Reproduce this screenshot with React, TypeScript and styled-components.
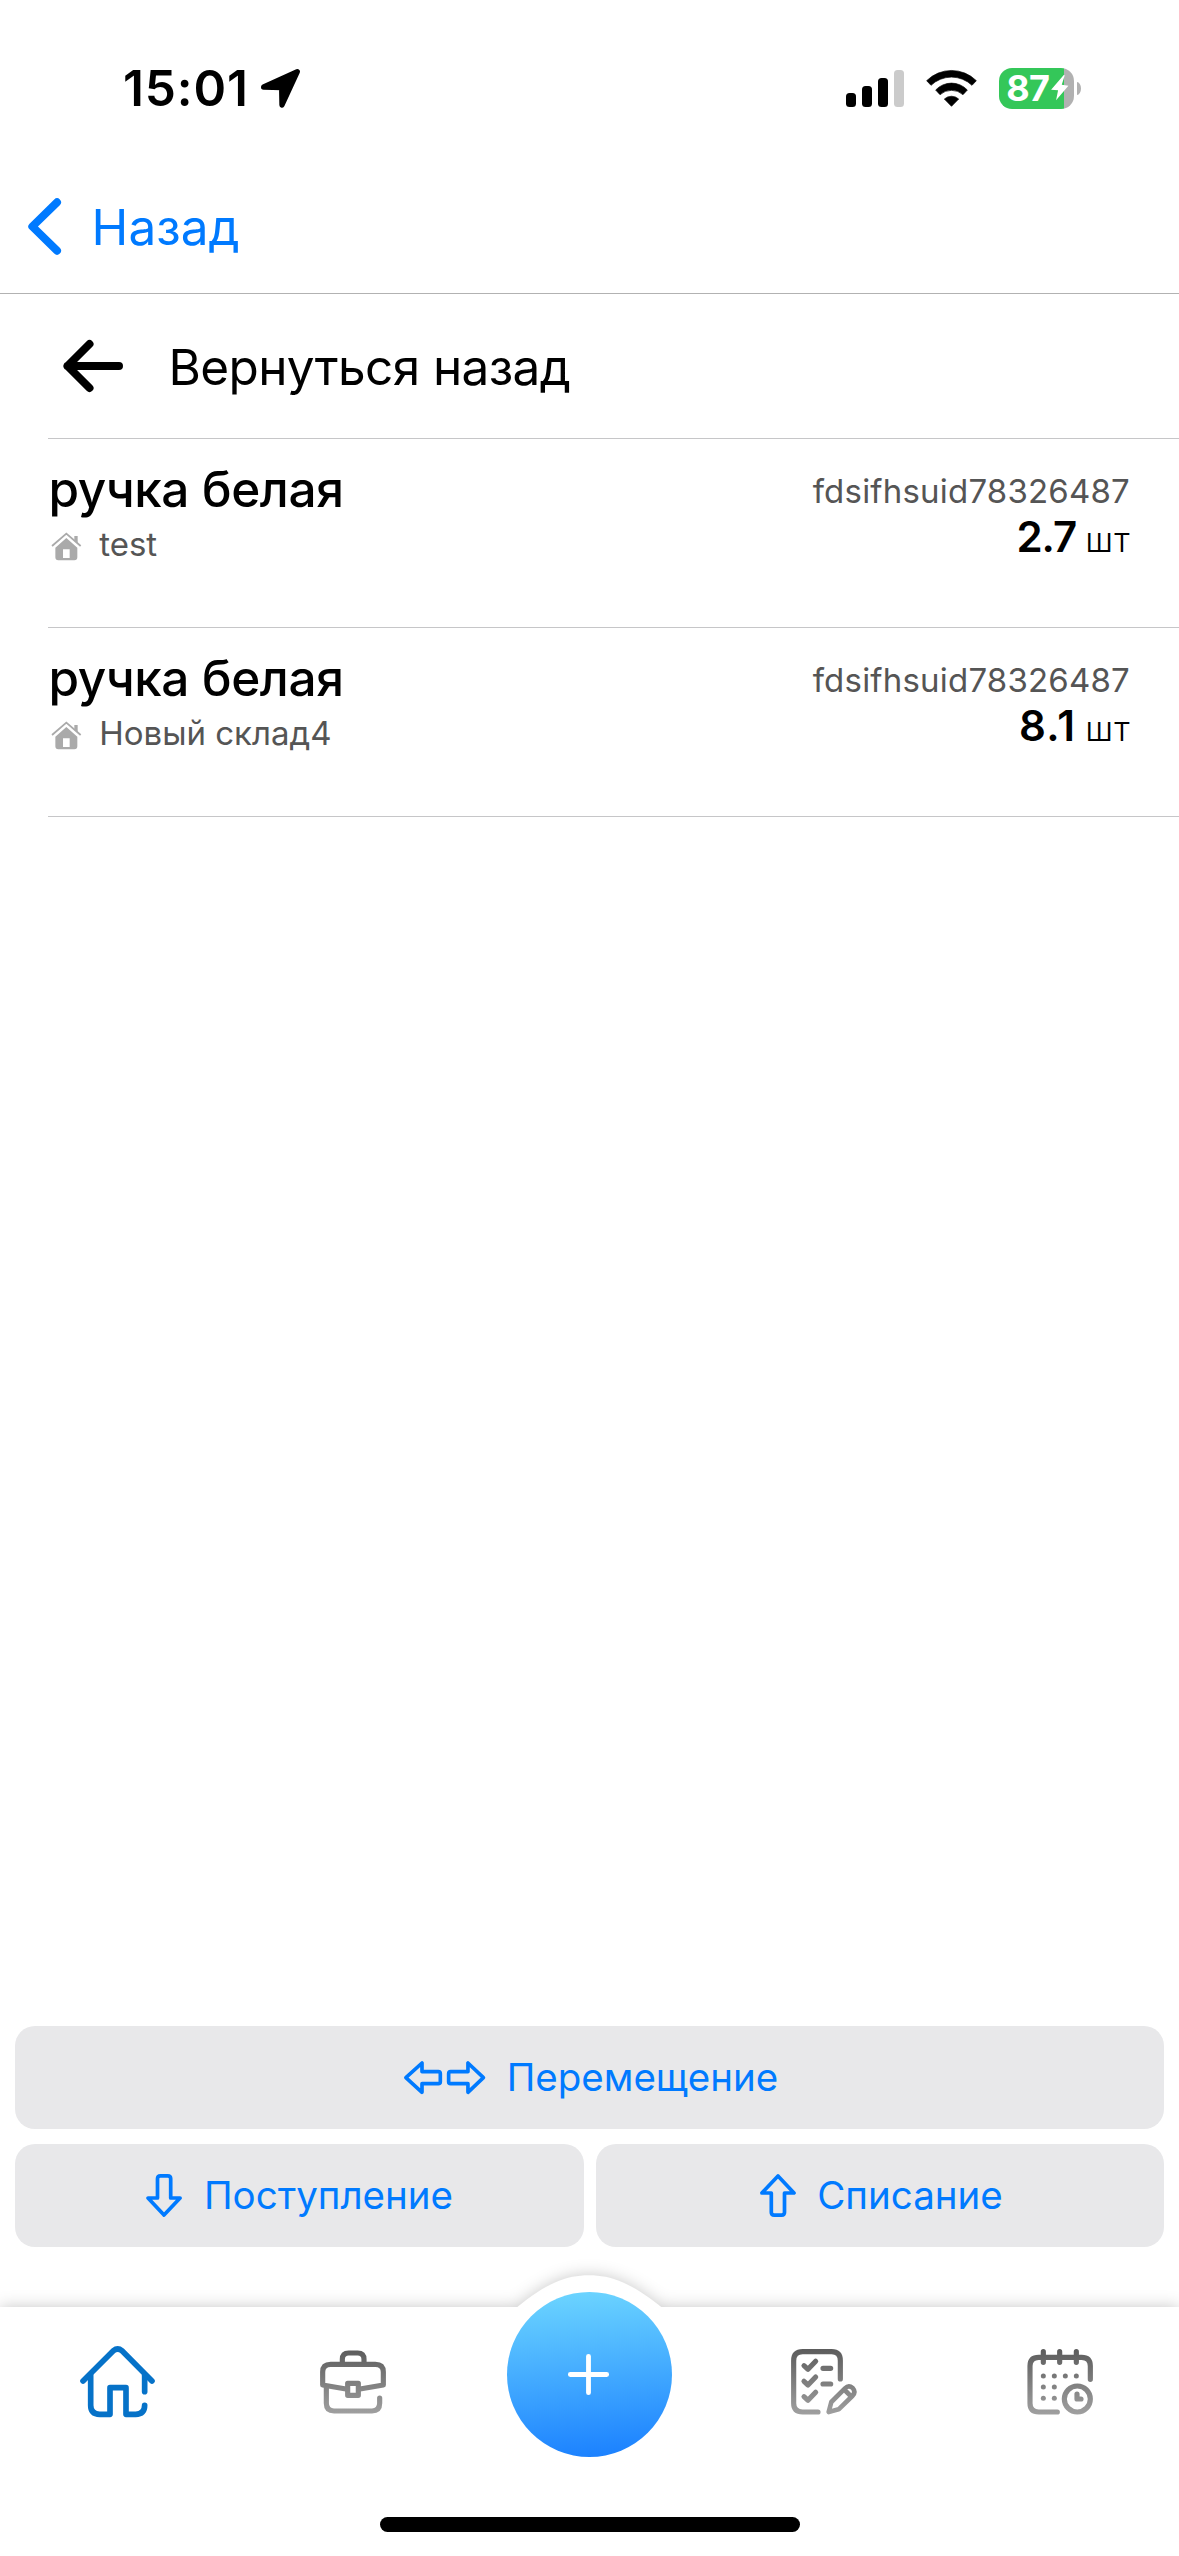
import React from "react";
import styled, { createGlobalStyle } from "styled-components";

const BLUE = "#007aff";

const GlobalStyle = createGlobalStyle`
  *, *::before, *::after { box-sizing: border-box; }
  body {
    margin: 0;
    background: #fff;
    color: #000;
    font-family: Inter, "Liberation Sans", sans-serif;
  }
  svg { display: block; flex: none; overflow: visible; }
  button { font: inherit; color: inherit; border: 0; background: none; padding: 0; margin: 0; }
`;

const Screen = styled.div`
  display: flex;
  flex-direction: column;
  width: 1179px;
  height: 2556px;
  overflow: hidden;
  background: #fff;
`;

/* Status bar */

const StatusBar = styled.header`
  display: flex;
  align-items: center;
  justify-content: space-between;
  height: 160px;
  padding: 16px 98px 0 123px;
`;

const StatusGroup = styled.div`
  display: flex;
  align-items: center;
`;

const Clock = styled.span`
  font-size: 49.5px;
  font-weight: 600;
  line-height: 60px;
  letter-spacing: 0.9px;
  margin-right: 12.2px;
`;

const Signal = styled.div`
  display: flex;
  align-items: flex-end;
  gap: 6px;
  height: 37px;
  margin-right: 22px;
`;

const SignalBar = styled.span<{ $height: number; $dim?: boolean }>`
  width: 10px;
  height: ${(p) => p.$height}px;
  border-radius: 3.5px;
  background: ${(p) => (p.$dim ? "#cbcbcb" : "#000")};
`;

const Battery = styled.div`
  display: flex;
  align-items: center;
  gap: 1.4px;
  width: 75px;
  height: 41px;
  margin: 0 3px 0 22px;
  padding-left: 7.3px;
  border-radius: 13px;
  background: linear-gradient(90deg, #34c759 65px, #b1b1b1 65px);
  color: #fff;
  font-size: 36px;
  font-weight: 700;
  line-height: 41px;
  letter-spacing: -0.7px;
`;

const BatteryCap = styled.span`
  width: 4px;
  height: 13px;
  border-radius: 0 4px 4px 0 / 0 6.5px 6.5px 0;
  background: #b1b1b1;
`;

/* Navigation */

const NavBar = styled.nav`
  display: flex;
  align-items: center;
  height: 134px;
  padding-left: 28px;
  border-bottom: 1px solid #b2b2b2;
  color: ${BLUE};
`;

const NavTitle = styled.span`
  margin-left: 30.6px;
  padding-top: 1px;
  font-size: 49.5px;
  line-height: 60px;
`;

const Content = styled.main`
  display: flex;
  flex-direction: column;
  flex: 1;
  padding-left: 48px;
`;

const BackRow = styled.div`
  display: flex;
  align-items: center;
  height: 145px;
  padding-left: 15px;
  border-bottom: 1px solid #c6c6c8;
`;

const BackLabel = styled.span`
  margin-left: 45.4px;
  padding-top: 2px;
  font-size: 49.5px;
  line-height: 60px;
  letter-spacing: -0.6px;
`;

/* Stock list */

const StockRow = styled.article`
  display: flex;
  justify-content: space-between;
  height: 189px;
  padding-right: 49px;
  border-bottom: 1px solid #c6c6c8;
`;

const StockInfo = styled.div`
  display: flex;
  flex-direction: column;
  padding-top: 20px;
`;

const StockName = styled.h2`
  margin: 0 0 5px;
  padding-left: 0.6px;
  font-size: 49.5px;
  font-weight: 500;
  line-height: 60px;
  letter-spacing: -0.38px;
`;

const Warehouse = styled.div`
  display: flex;
  align-items: center;
  gap: 17.8px;
  padding-left: 2.7px;
  font-size: 33px;
  line-height: 40px;
  color: #555;
`;

const WarehouseIcon = styled.span`
  padding-top: 5px;
`;

const StockFigures = styled.div`
  display: flex;
  flex-direction: column;
  align-items: flex-end;
  padding-top: 32px;
`;

const Code = styled.span`
  margin-bottom: 1px;
  font-size: 33px;
  line-height: 40px;
  letter-spacing: 0.2px;
  color: #555;
`;

const Quantity = styled.div`
  display: flex;
  align-items: baseline;
  gap: 9px;
  line-height: 50px;
`;

const Amount = styled.strong<{ $tracking: number }>`
  font-size: 42px;
  font-weight: 600;
  letter-spacing: ${(p) => p.$tracking}px;
`;

const Unit = styled.span`
  font-size: 34.5px;
  font-weight: 300;
  letter-spacing: 1px;
  margin-right: -0.5px;
`;

/* Actions */

const Actions = styled.section`
  display: grid;
  grid-template-columns: 1fr 1fr;
  gap: 15px 12px;
  padding: 0 15px 60px;
`;

const ActionButton = styled.button<{ $wide?: boolean; $inset?: number }>`
  grid-column: ${(p) => (p.$wide ? "1 / -1" : "auto")};
  display: flex;
  align-items: center;
  justify-content: center;
  gap: 21.5px;
  height: 103px;
  padding-left: ${(p) => p.$inset ?? 0}px;
  border-radius: 20px;
  background: #e8e8ea;
  color: ${BLUE};
  font-size: 38.5px;
  line-height: 48px;
`;

const ActionLabel = styled.span`
  padding-bottom: 2px;
`;

const Flip = styled.span`
  transform: rotate(180deg);
`;

/* Tab bar */

const TabBar = styled.footer`
  position: relative;
  display: flex;
  flex-direction: column;
  height: 249px;
`;

const TabBackdrop = styled.div`
  position: absolute;
  inset: 0;
  background: #fff;
  filter: drop-shadow(0 0 8px rgba(0, 0, 0, 0.22));
`;

const Bump = styled.svg`
  position: absolute;
  left: 517px;
  top: -32px;
`;

const Tabs = styled.div`
  position: relative;
  display: grid;
  grid-template-columns: repeat(5, 1fr);
  height: 150px;
`;

const Tab = styled.button<{ $active?: boolean }>`
  display: flex;
  align-items: center;
  justify-content: center;
  padding-right: ${(p) => (p.$active ? 0 : 2)}px;
`;

const AddButton = styled.button`
  display: flex;
  align-items: center;
  justify-content: center;
  justify-self: center;
  width: 165px;
  height: 165px;
  margin-top: -15px;
  border-radius: 50%;
  background: linear-gradient(175deg, #6cd5ff 2%, #1a80ff 98%);
`;

const HomeIndicator = styled.div`
  position: relative;
  width: 420px;
  height: 15px;
  margin: 60px auto 0;
  border-radius: 7.5px;
  background: #000;
`;

/* Icons */

const LocationIcon = () => (
  <svg width="39" height="39" viewBox="783 87 117 117" fill="#000" stroke="#000" strokeWidth="16" strokeLinejoin="round">
    <path d="M892 95 L846 195 L845 143 L791 141 Z" />
  </svg>
);

const WifiIcon = () => (
  <svg width="51" height="37" viewBox="378 87 153 111" fill="#000" stroke="#000" strokeWidth="2" strokeLinejoin="round">
    <path d="M380 119 A106 106 0 0 1 529 119 L516 133 A89 89 0 0 0 393 133 Z" />
    <path d="M407 147 A65 65 0 0 1 502 147 L489 161 A52 52 0 0 0 420 161 Z" />
    <path d="M433 174 A32 32 0 0 1 476 174 L454.500 196 Z" />
  </svg>
);

const BoltIcon = () => (
  <svg width="17.500" height="25.300" viewBox="752 108 52 76" fill="#fff">
    <path d="M790 108 L752 152 L773 154 L767 184 L804 140 L784 137 L793 109 Z" />
  </svg>
);

const ChevronIcon = () => (
  <svg width="33" height="57" viewBox="84 475 99 171" fill="none" stroke={BLUE} strokeWidth="24" strokeLinecap="round" strokeLinejoin="round">
    <path d="M171 488 L97 560.500 L171 633" />
  </svg>
);

const BackArrowIcon = () => (
  <svg width="60" height="52" viewBox="63 340 60 52" fill="none" stroke="#000" strokeWidth="8" strokeLinecap="round" strokeLinejoin="round">
    <path d="M119 366 H67.500 M89.500 344 L67.500 366 L89.500 388" />
  </svg>
);

const HouseIcon = () => (
  <svg width="30.700" height="29.300" viewBox="152 363 92 88">
    <path d="M155 405 L198 368 L241 405" fill="none" stroke="#aaa" strokeWidth="5.500" />
    <path d="M222 375 H232 V397 L222 388 Z" fill="#aaa" />
    <path fill="#aaa" fillRule="evenodd" d="M165 410 L198 381 L231 410 V439 Q231 448 222 448 H174 Q165 448 165 439 Z M188 415 V441 H208 V415 Z" />
  </svg>
);

const SwapIcon = () => (
  <svg width="81.300" height="33.300" viewBox="42 65 244 100" fill="none" stroke={BLUE} strokeWidth="11" strokeLinejoin="round">
    <path d="M47.500 115 L96 71 V97 H145 Q151 97 151 103 V127 Q151 133 145 133 H96 V159 Z" />
    <path d="M280.500 115 L234 71 V97 H182 Q176 97 176 103 V127 Q176 133 182 133 H234 V159 Z" />
  </svg>
);

const DownIcon = () => (
  <svg width="36" height="43" viewBox="0 0 36 43" fill="none" stroke={BLUE} strokeWidth="3.700" strokeLinejoin="round">
    <path d="M18 41.100 L2 24 H11.500 V4.800 Q11.500 1.900 14.400 1.900 H21.800 Q24.700 1.900 24.700 4.800 V24 H34.100 Z" />
  </svg>
);

const HomeIcon = () => (
  <svg width="75" height="71.300" viewBox="90 167 225 214" fill="none" stroke="#0672c8" strokeWidth="17" strokeLinecap="round" strokeLinejoin="round">
    <path d="M99 272 L190 181 Q203 171 216 181 L306 272" />
    <path d="M122 255 V345 Q122 372 149 372 H180 V292 H228 V372 H257 Q284 372 284 345" />
    <path d="M284 255 V304" />
  </svg>
);

const TabGradient = ({ id, y1, y2 }: { id: string; y1: number; y2: number }) => (
  <linearGradient id={id} gradientUnits="userSpaceOnUse" x1="0" x2="0" y1={y1} y2={y2}>
    <stop offset="0" stopColor="#5c5c5c" />
    <stop offset="1" stopColor="#a0a0a0" />
  </linearGradient>
);

const BriefcaseIcon = () => (
  <svg width="66" height="64" viewBox="810 180 198 192" fill="none" stroke="url(#briefcase)" strokeWidth="15.500" strokeLinecap="round" strokeLinejoin="round">
    <TabGradient id="briefcase" y1={180} y2={372} />
    <path d="M877 222 V208 Q877 189 896 189 H923 Q942 189 942 208 V222" />
    <path d="M888 297 L818 285 V246 Q818 223 842 223 H976 Q1000 223 1000 246 V285 L930 297" />
    <path d="M893 280 H925 V316 H893 Z" />
    <path d="M829 290 V340 Q829 363 852 363 H966 Q989 363 989 340 V324" />
  </svg>
);

const ChecklistIcon = () => (
  <svg width="66" height="66" viewBox="123 117 198 198" fill="none" stroke="url(#checklist)" strokeWidth="15.500" strokeLinecap="round" strokeLinejoin="round">
    <TabGradient id="checklist" y1={117} y2={315} />
    <path d="M271 207 V152 Q271 125 245 125 H158 Q131 125 131 152 V280 Q131 306 158 306 H204" />
    <path d="M162 167 L174 178 L197 154 M162 214 L174 225 L197 201 M162 260 L174 271 L197 247" />
    <path d="M219 175 H242 M219 222 H242" />
    <path d="M236 306 L244 276 L285 235 Q296 224 308 234 Q319 246 307 258 L266 298 Z M284 240 L302 258" strokeWidth="14" />
  </svg>
);

const DOTS: [number, number][] = [
  [880, 198], [913, 198], [946, 198], [979, 198],
  [880, 231], [913, 231], [880, 265], [913, 265],
];

const CalendarIcon = () => (
  <svg width="66" height="66" viewBox="831 117 198 198" fill="none" stroke="url(#calendar)" strokeWidth="15.500" strokeLinecap="round" strokeLinejoin="round">
    <TabGradient id="calendar" y1={117} y2={315} />
    <path d="M1021 208 V168 Q1021 142 995 142 H866 Q840 142 840 168 V280 Q840 306 866 306 H922" />
    <path d="M880 125 V157 M929 125 V157 M979 125 V157" />
    {DOTS.map(([x, y]) => (
      <circle key={`${x}-${y}`} cx={x} cy={y} r="7.500" fill="url(#calendar)" stroke="none" />
    ))}
    <circle cx="982" cy="267" r="39" />
    <path d="M981 252 V267 H993" />
  </svg>
);

const PlusIcon = () => (
  <svg width="43" height="41" viewBox="354 312 129 123" fill="none" stroke="#fff" strokeWidth="14.500" strokeLinecap="round">
    <path d="M361 373.500 H470 M415.500 319 V428" />
  </svg>
);

const STOCK = [
  { name: "ручка белая", warehouse: "test", code: "fdsifhsuid78326487", amount: "2.7", tracking: -1, unit: "шт" },
  { name: "ручка белая", warehouse: "Новый склад4", code: "fdsifhsuid78326487", amount: "8.1", tracking: 1.3, unit: "шт" },
];

export default function App() {
  return (
    <Screen>
      <GlobalStyle />
      <StatusBar>
        <StatusGroup>
          <Clock>15:01</Clock>
          <LocationIcon />
        </StatusGroup>
        <StatusGroup>
          <Signal>
            <SignalBar $height={14} />
            <SignalBar $height={21} />
            <SignalBar $height={29} />
            <SignalBar $height={37} $dim />
          </Signal>
          <WifiIcon />
          <Battery>
            87
            <BoltIcon />
          </Battery>
          <BatteryCap />
        </StatusGroup>
      </StatusBar>

      <NavBar>
        <ChevronIcon />
        <NavTitle>Назад</NavTitle>
      </NavBar>

      <Content>
        <BackRow>
          <BackArrowIcon />
          <BackLabel>Вернуться назад</BackLabel>
        </BackRow>
        {STOCK.map((item) => (
          <StockRow key={item.warehouse}>
            <StockInfo>
              <StockName>{item.name}</StockName>
              <Warehouse>
                <WarehouseIcon>
                  <HouseIcon />
                </WarehouseIcon>
                {item.warehouse}
              </Warehouse>
            </StockInfo>
            <StockFigures>
              <Code>{item.code}</Code>
              <Quantity>
                <Amount $tracking={item.tracking}>{item.amount}</Amount>
                <Unit>{item.unit}</Unit>
              </Quantity>
            </StockFigures>
          </StockRow>
        ))}
      </Content>

      <Actions>
        <ActionButton $wide $inset={3}>
          <SwapIcon />
          <ActionLabel>Перемещение</ActionLabel>
        </ActionButton>
        <ActionButton $inset={1}>
          <DownIcon />
          <ActionLabel>Поступление</ActionLabel>
        </ActionButton>
        <ActionButton $inset={3}>
          <Flip>
            <DownIcon />
          </Flip>
          <ActionLabel>Списание</ActionLabel>
        </ActionButton>
      </Actions>

      <TabBar>
        <TabBackdrop>
          <Bump width="145" height="34" viewBox="202 75 435 102" fill="#fff">
            <path d="M203 171 C290 100 350 76 418 76 C486 76 545 100 635 171 V177 H203 Z" />
          </Bump>
        </TabBackdrop>
        <Tabs>
          <Tab $active>
            <HomeIcon />
          </Tab>
          <Tab>
            <BriefcaseIcon />
          </Tab>
          <AddButton>
            <PlusIcon />
          </AddButton>
          <Tab>
            <ChecklistIcon />
          </Tab>
          <Tab>
            <CalendarIcon />
          </Tab>
        </Tabs>
        <HomeIndicator />
      </TabBar>
    </Screen>
  );
}
